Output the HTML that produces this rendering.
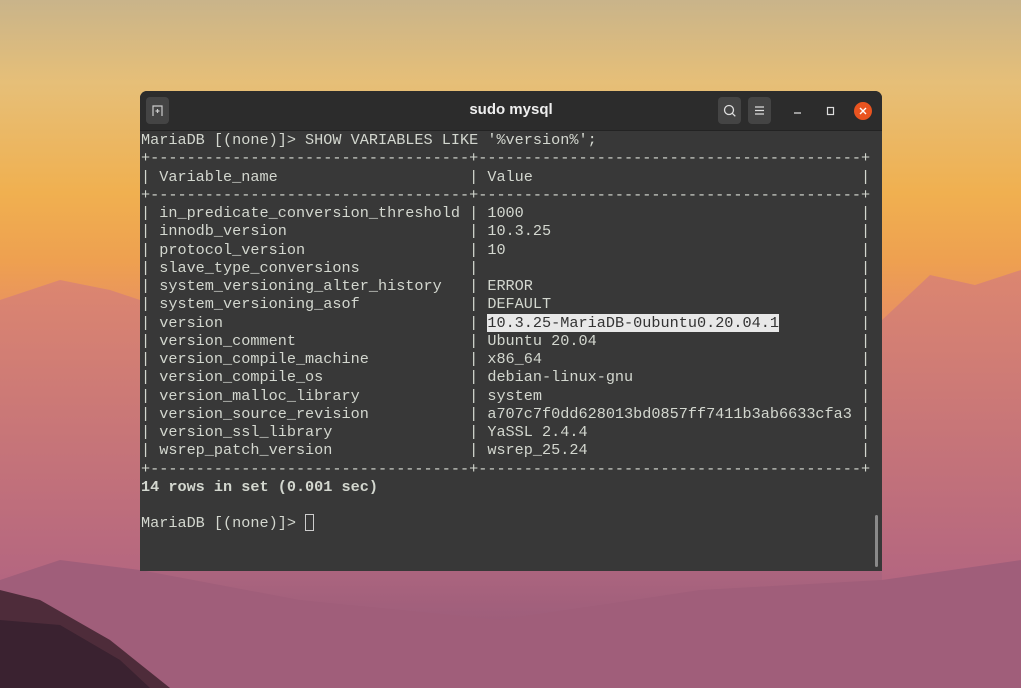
<!DOCTYPE html>
<html><head><meta charset="utf-8"><style>
html,body{margin:0;padding:0;width:1021px;height:688px;overflow:hidden}
body{position:relative;background:linear-gradient(180deg,#c9b48a 0%,#e6bf78 12%,#f0b050 28%,#eea050 38%,#e58a6a 50%,#d37a7e 62%,#bb6c82 75%,#a2607c 88%,#8e5676 100%)}
svg.bg{position:absolute;left:0;top:0}
.win{position:absolute;left:140px;top:91px;width:742px;height:480px;background:#383838;border-radius:7px 7px 0 0;overflow:hidden}
.tb{position:absolute;left:0;top:0;width:742px;height:39px;background:#2c2c2c;border-bottom:1px solid #232323}
.title{position:absolute;left:0;right:0;top:10px;text-align:center;color:#eee;font:bold 15px "Liberation Sans",sans-serif}
.btn{position:absolute;top:6px;width:23px;height:27px;background:#444;border-radius:4px}
pre{position:absolute;left:1px;top:40px;margin:0;font:15.2px/18.25px "Liberation Mono",monospace;color:#d3d7cf;white-space:pre}
.hl{background:#e8e8e8;color:#333}
.cur{display:inline-block;width:9px;height:17px;border:1px solid #ccc;box-sizing:border-box;vertical-align:-4px}
.sb{position:absolute;left:735px;top:424px;width:3px;height:52px;background:#8a8a8a;border-radius:2px}
</style></head><body>
<svg class="bg" width="1021" height="688">
<defs><linearGradient id="g1" x1="0" y1="0" x2="0" y2="1"><stop offset="0" stop-color="#dc8670"/><stop offset="1" stop-color="#b46680"/></linearGradient></defs>
<polygon points="0,300 60,280 110,290 140,300 140,580 0,580" fill="url(#g1)"/>
<polygon points="882,320 930,275 975,285 1021,270 1021,580 882,580" fill="url(#g1)"/>
<polygon points="0,580 60,560 140,570 300,600 500,620 700,590 882,580 1021,560 1021,688 0,688" fill="#a05e7a"/>
<polygon points="0,590 40,600 110,640 170,688 0,688" fill="#4e2c3a"/>
<polygon points="0,620 60,625 120,660 150,688 0,688" fill="#3a2230"/>
</svg>
<div class="win">
<div class="tb">
<div class="btn" style="left:6px;width:23px"><svg width="23" height="27"><path d="M7 19V9h9v10M9.5 14h4M11.5 12v4" stroke="#ccc" stroke-width="1.2" fill="none"/></svg></div>
<div class="title">sudo mysql</div>
<div class="btn" style="left:578px"><svg width="23" height="27"><circle cx="11" cy="13" r="4.5" stroke="#ddd" stroke-width="1.3" fill="none"/><path d="M14.3 16.3l3 3" stroke="#ddd" stroke-width="1.3"/></svg></div>
<div class="btn" style="left:608px"><svg width="23" height="27"><path d="M7 10h9M7 13.5h9M7 17h9" stroke="#ddd" stroke-width="1.2"/></svg></div>
<svg style="position:absolute;left:650px;top:12px" width="16" height="16"><path d="M4 10h7" stroke="#ddd" stroke-width="1.2"/></svg>
<svg style="position:absolute;left:682px;top:12px" width="16" height="16"><rect x="5.5" y="4.5" width="6" height="7" stroke="#ddd" stroke-width="1.2" fill="none"/></svg>
<svg style="position:absolute;left:713px;top:10px" width="20" height="20"><circle cx="10" cy="10" r="9" fill="#e95420"/><path d="M7 7l6 6M13 7l-6 6" stroke="#fff" stroke-width="1.4"/></svg>
</div>
<pre>MariaDB [(none)]&gt; SHOW VARIABLES LIKE '%version%';
+-----------------------------------+------------------------------------------+
| Variable_name                     | Value                                    |
+-----------------------------------+------------------------------------------+
| in_predicate_conversion_threshold | 1000                                     |
| innodb_version                    | 10.3.25                                  |
| protocol_version                  | 10                                       |
| slave_type_conversions            |                                          |
| system_versioning_alter_history   | ERROR                                    |
| system_versioning_asof            | DEFAULT                                  |
| version                           | <span class="hl">10.3.25-MariaDB-0ubuntu0.20.04.1</span>         |
| version_comment                   | Ubuntu 20.04                             |
| version_compile_machine           | x86_64                                   |
| version_compile_os                | debian-linux-gnu                         |
| version_malloc_library            | system                                   |
| version_source_revision           | a707c7f0dd628013bd0857ff7411b3ab6633cfa3 |
| version_ssl_library               | YaSSL 2.4.4                              |
| wsrep_patch_version               | wsrep_25.24                              |
+-----------------------------------+------------------------------------------+
<b>14 rows in set (0.001 sec)</b>

MariaDB [(none)]&gt; <span class="cur"></span></pre>
<div class="sb"></div>
</div>
</body></html>
